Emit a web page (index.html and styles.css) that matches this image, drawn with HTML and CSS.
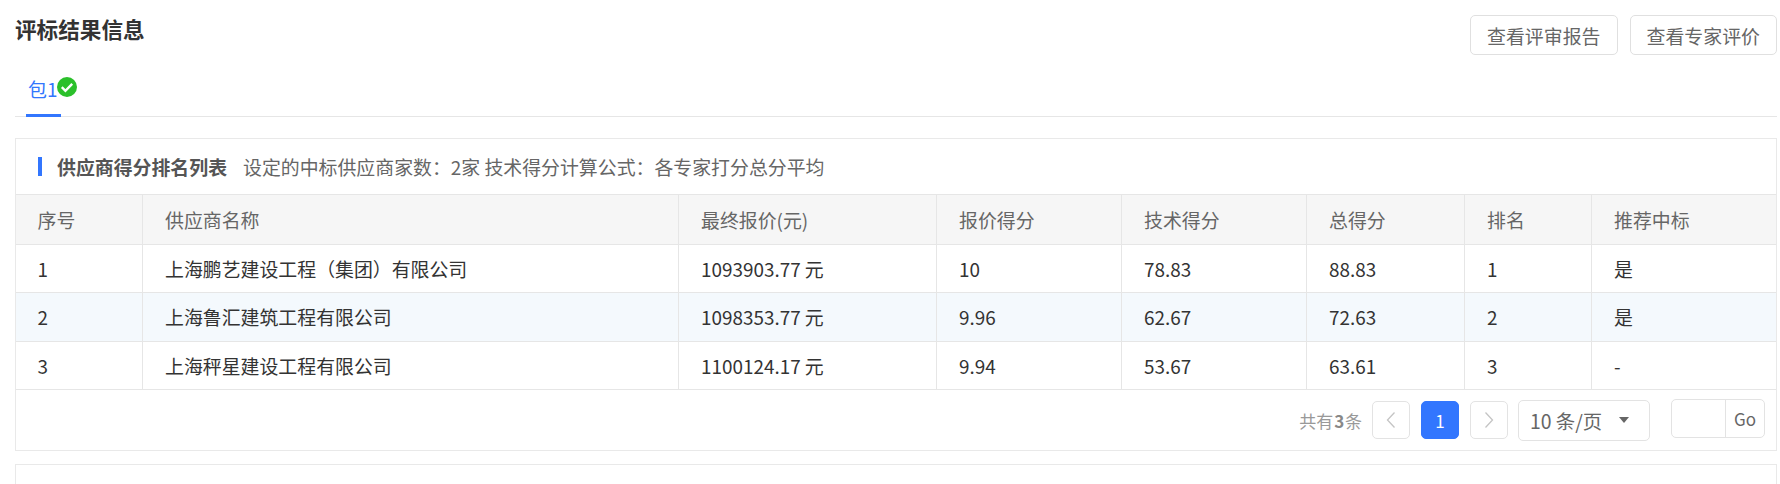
FILE: index.html
```html
<!DOCTYPE html>
<html lang="zh-CN">
<head>
    <meta charset="UTF-8">
    <title>评标结果信息</title>
    <link rel="stylesheet" href="styles.css">
</head>
<body>
    <div class="top-bar">
        <h1>评标结果信息</h1>
        <div class="top-actions">
            <button class="plain-btn">查看评审报告</button>
            <button class="plain-btn">查看专家评价</button>
        </div>
    </div>

    <div class="tabs">
        <div class="tab active">
            包1<svg class="tab-check" viewBox="0 0 20 20" width="20" height="20"><circle cx="10" cy="10" r="10" fill="#2bc02b"/><path d="M4.8 10.2l3.6 3.6 6.8-7" fill="none" stroke="#fff" stroke-width="2.4"/></svg>
        </div>
    </div>

    <div class="card">
        <div class="card-title">
            <span class="title-mark"></span>
            <strong>供应商得分排名列表</strong>
            <span class="title-note">设定的中标供应商家数：2家 技术得分计算公式：各专家打分总分平均</span>
        </div>
        <table class="score-table">
            <colgroup>
                <col class="col-no">
                <col class="col-name">
                <col class="col-price">
                <col class="col-score">
                <col class="col-score">
                <col class="col-total">
                <col class="col-rank">
                <col>
            </colgroup>
            <thead>
                <tr>
                    <th>序号</th>
                    <th>供应商名称</th>
                    <th>最终报价(元)</th>
                    <th>报价得分</th>
                    <th>技术得分</th>
                    <th>总得分</th>
                    <th>排名</th>
                    <th>推荐中标</th>
                </tr>
            </thead>
            <tbody>
                <tr>
                    <td>1</td>
                    <td>上海鹏艺建设工程（集团）有限公司</td>
                    <td>1093903.77 元</td>
                    <td>10</td>
                    <td>78.83</td>
                    <td>88.83</td>
                    <td>1</td>
                    <td>是</td>
                </tr>
                <tr class="hover">
                    <td>2</td>
                    <td>上海鲁汇建筑工程有限公司</td>
                    <td>1098353.77 元</td>
                    <td>9.96</td>
                    <td>62.67</td>
                    <td>72.63</td>
                    <td>2</td>
                    <td>是</td>
                </tr>
                <tr>
                    <td>3</td>
                    <td>上海秤星建设工程有限公司</td>
                    <td>1100124.17 元</td>
                    <td>9.94</td>
                    <td>53.67</td>
                    <td>63.61</td>
                    <td>3</td>
                    <td>-</td>
                </tr>
            </tbody>
        </table>
        <div class="pager">
            <span class="pager-total">共有 <b>3</b> 条</span>
            <button class="page-btn"><svg viewBox="0 0 10 18" width="10" height="18"><path d="M8.5 1.5L1.5 9l7 7.5" fill="none" stroke="#c4c4c4" stroke-width="1.3"/></svg></button>
            <button class="page-btn current">1</button>
            <button class="page-btn"><svg viewBox="0 0 10 18" width="10" height="18"><path d="M1.5 1.5L8.5 9l-7 7.5" fill="none" stroke="#c4c4c4" stroke-width="1.3"/></svg></button>
            <div class="page-size">10 条/页<span class="caret"></span></div>
            <div class="page-jump"><span class="jump-input"></span><span class="jump-go">Go</span></div>
        </div>
    </div>

    <div class="card next-card"></div>
</body>
</html>
```

FILE: styles.css
```css
html, body {
    height: 100%;
}

body {
    margin: 0;
    padding: 0 3px 0 15px;
    box-sizing: border-box;
    overflow: hidden;
    background: #fff;
    font-family: "Noto Sans CJK SC", "Open Sans", sans-serif;
    font-size: 18.9px;
    color: #333;
}

.top-bar {
    display: flex;
    justify-content: space-between;
    align-items: flex-start;
    height: 60px;
    padding-top: 15px;
    box-sizing: border-box;
}

h1 {
    margin: -2px 0 0;
    font-size: 21.6px;
    line-height: 32px;
    font-weight: 700;
    color: #333;
}

.top-actions {
    display: flex;
    gap: 12px;
}

.plain-btn {
    width: 147.5px;
    height: 40px;
    padding: 0;
    border: 1px solid #e0e0e0;
    border-radius: 5px;
    background: #fff;
    font: inherit;
    color: #666;
}

.tabs {
    display: flex;
    height: 57px;
    padding-left: 11px;
    box-sizing: border-box;
    border-bottom: 1px solid #e6e6e6;
}

.tab {
    display: flex;
    align-items: flex-start;
    height: 57px;
    padding: 4px 0 0 2px;
    box-sizing: border-box;
    line-height: 50px;
    width: 35px;
    white-space: nowrap;
    color: #3276fe;
    border-bottom: 3px solid #3276fe;
}

.tab-check {
    flex: none;
    margin-top: 13px;
}

.card {
    margin-top: 21px;
    border: 1px solid #e9e9e9;
}

.card-title {
    display: flex;
    align-items: center;
    height: 55px;
    padding-left: 22px;
    box-sizing: border-box;
}

.title-mark {
    width: 4px;
    height: 19px;
    margin-right: 15px;
    background: #3276fe;
}

.card-title strong {
    color: #555;
    margin-right: 16px;
}

.title-note {
    color: #666;
}

.score-table {
    width: 100%;
    border-collapse: collapse;
    table-layout: fixed;
}

.col-no { width: 126px; }
.col-name { width: 536px; }
.col-price { width: 258px; }
.col-score { width: 185px; }
.col-total { width: 158px; }
.col-rank { width: 127px; }

.score-table th,
.score-table td {
    padding: 0 0 0 22.5px;
    border: 1px solid #e6e6e6;
    text-align: left;
    font-weight: 400;
    line-height: 28px;
}

.score-table tr > :first-child {
    padding-left: 21.5px;
    border-left: 0;
}

.score-table tr > :last-child { border-right: 0; }

.score-table th {
    height: 49px;
    background: #f6f6f6;
    color: #666;
}

.score-table td {
    height: 47px;
}

.score-table .hover td {
    height: 48px;
    background: #f4f9fd;
}

.pager {
    display: flex;
    align-items: center;
    justify-content: flex-end;
    height: 60px;
    padding: 0 11px 0 0;
    box-sizing: border-box;
}

.pager-total {
    margin-right: 10px;
    font-size: 17px;
    color: #999;
    word-spacing: -3px;
}

.pager-total b {
    font-weight: 700;
    color: #888;
}

.page-btn {
    display: flex;
    align-items: center;
    justify-content: center;
    width: 38px;
    height: 38px;
    margin-right: 11px;
    padding: 0;
    border: 1px solid #e3e3e3;
    border-radius: 5px;
    background: #fff;
    font: inherit;
    font-size: 17px;
}

.page-btn.current {
    border-color: #3276fe;
    background: #3276fe;
    color: #fff;
}

.page-size {
    display: flex;
    align-items: center;
    width: 132px;
    height: 41px;
    padding-left: 11px;
    box-sizing: border-box;
    border: 1px solid #e3e3e3;
    border-radius: 5px;
    color: #666;
    margin-right: 21px;
    margin-left: -1px;
    font-size: 19.4px;
}

.caret {
    width: 0;
    height: 0;
    margin-left: 17px;
    border: 5px solid transparent;
    border-top: 6px solid #666;
    border-bottom: 0;
}

.page-jump {
    display: flex;
    width: 94px;
    height: 39px;
    box-sizing: border-box;
    border: 1px solid #e3e3e3;
    border-radius: 5px;
    margin-bottom: 3px;
}

.jump-input {
    width: 53px;
    border-right: 1px solid #e3e3e3;
}

.jump-go {
    flex: 1;
    text-align: center;
    font-size: 17px;
    line-height: 37px;
    color: #666;
}

.next-card {
    margin-top: 13px;
    height: 20px;
    border-bottom: 0;
}
```
